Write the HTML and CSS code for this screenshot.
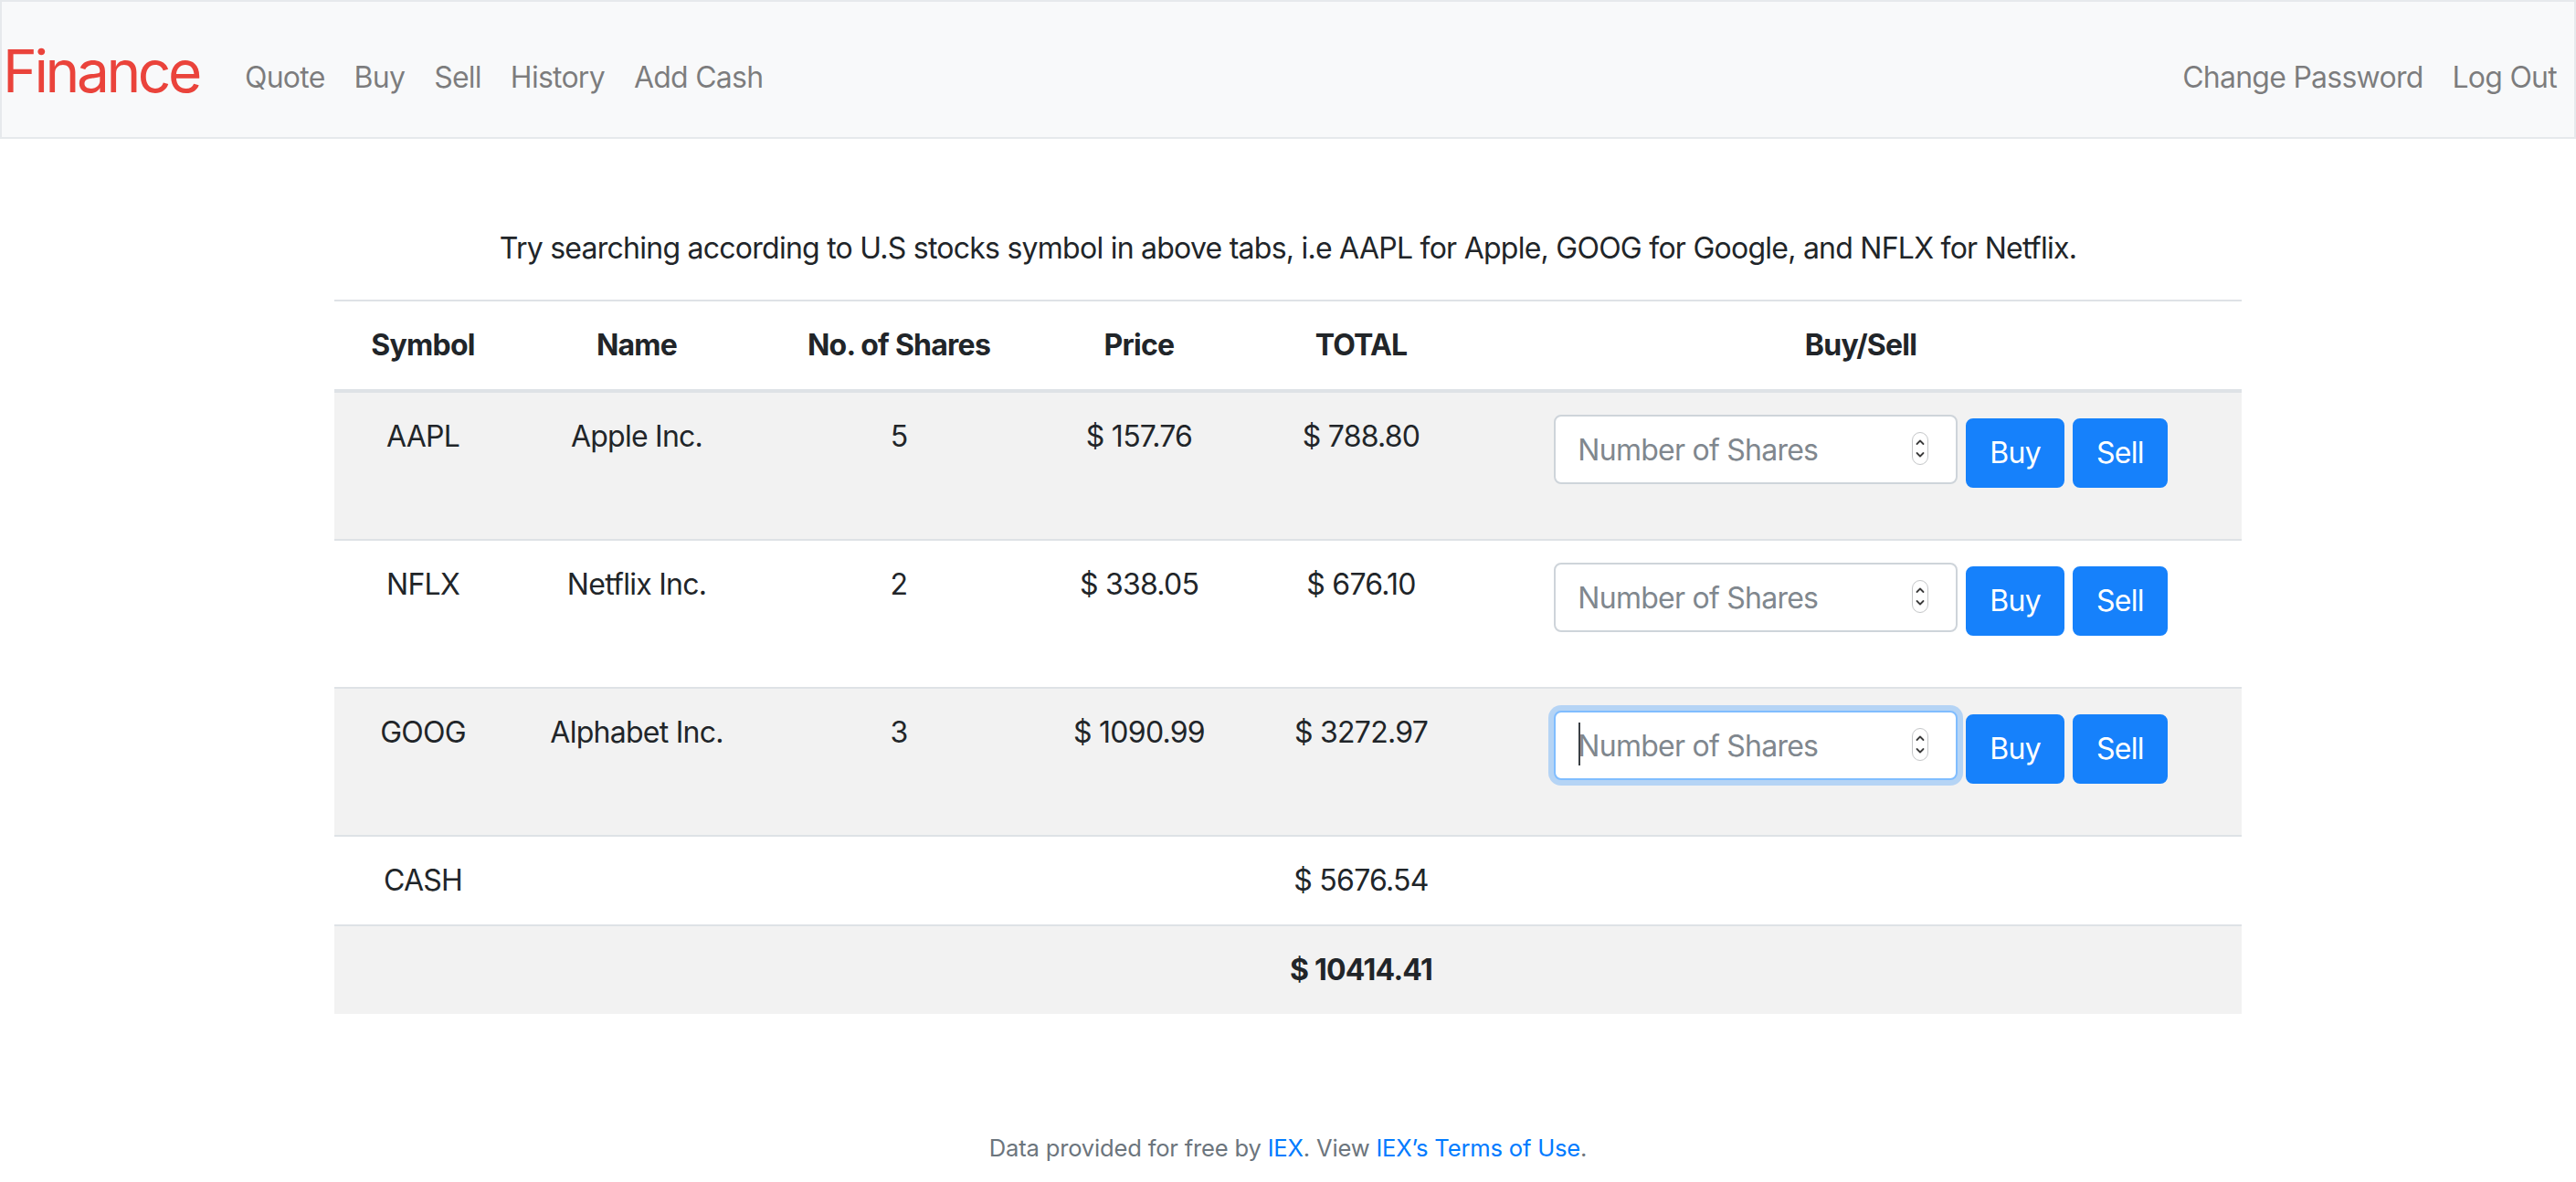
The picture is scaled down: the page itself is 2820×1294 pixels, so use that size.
FILE: index.html
```html
<!DOCTYPE html>
<html lang="en">
<head>
<meta charset="utf-8">
<title>C$50 Finance: Portfolio</title>
<link rel="stylesheet" href="styles.css">
</head>
<body>
<nav class="navbar">
  <a class="navbar-brand" href="/">Finance</a>
  <ul class="nav nav-main">
    <li><a class="nav-link" href="/quote">Quote</a></li>
    <li><a class="nav-link" href="/buy">Buy</a></li>
    <li><a class="nav-link" href="/sell">Sell</a></li>
    <li><a class="nav-link" href="/history">History</a></li>
    <li><a class="nav-link" href="/add_cash">Add Cash</a></li>
  </ul>
  <ul class="nav nav-user">
    <li><a class="nav-link" href="/change_password">Change Password</a></li>
    <li><a class="nav-link" href="/logout">Log Out</a></li>
  </ul>
</nav>

<main class="container">
  <p class="hint">Try searching according to U.S stocks symbol in above tabs, i.e AAPL for Apple, GOOG for Google, and NFLX for Netflix.</p>
  <table class="portfolio">
    <colgroup>
      <col class="c-symbol"><col class="c-name"><col class="c-shares"><col class="c-price"><col class="c-total"><col class="c-trade">
    </colgroup>
    <thead>
      <tr><th>Symbol</th><th>Name</th><th>No. of Shares</th><th>Price</th><th>TOTAL</th><th>Buy/Sell</th></tr>
    </thead>
    <tbody>
      <tr>
        <td>AAPL</td><td>Apple Inc.</td><td>5</td><td>$ 157.76</td><td>$ 788.80</td>
        <td>
          <form class="trade">
            <span class="field"><input class="form-control" type="text" placeholder="Number of Shares"><svg class="spin" viewBox="0 0 18 36"><rect x="0.5" y="0.5" width="17" height="35" rx="8.5"/><path d="M5.5 13 L9 9.5 L12.5 13"/><path d="M5.5 23 L9 26.5 L12.5 23"/></svg></span>
            <button class="btn" type="button">Buy</button>
            <button class="btn" type="button">Sell</button>
          </form>
        </td>
      </tr>
      <tr>
        <td>NFLX</td><td>Netflix Inc.</td><td>2</td><td>$ 338.05</td><td>$ 676.10</td>
        <td>
          <form class="trade">
            <span class="field"><input class="form-control" type="text" placeholder="Number of Shares"><svg class="spin" viewBox="0 0 18 36"><rect x="0.5" y="0.5" width="17" height="35" rx="8.5"/><path d="M5.5 13 L9 9.5 L12.5 13"/><path d="M5.5 23 L9 26.5 L12.5 23"/></svg></span>
            <button class="btn" type="button">Buy</button>
            <button class="btn" type="button">Sell</button>
          </form>
        </td>
      </tr>
      <tr>
        <td>GOOG</td><td>Alphabet Inc.</td><td>3</td><td>$ 1090.99</td><td>$ 3272.97</td>
        <td>
          <form class="trade">
            <span class="field"><input class="form-control focused" type="text" placeholder="Number of Shares"><span class="caret"></span><svg class="spin" viewBox="0 0 18 36"><rect x="0.5" y="0.5" width="17" height="35" rx="8.5"/><path d="M5.5 13 L9 9.5 L12.5 13"/><path d="M5.5 23 L9 26.5 L12.5 23"/></svg></span>
            <button class="btn" type="button">Buy</button>
            <button class="btn" type="button">Sell</button>
          </form>
        </td>
      </tr>
      <tr>
        <td>CASH</td><td></td><td></td><td></td><td>$ 5676.54</td><td></td>
      </tr>
      <tr>
        <td></td><td></td><td></td><td></td><td class="grand">$ 10414.41</td><td></td>
      </tr>
    </tbody>
  </table>
</main>

<footer class="footer">
  Data provided for free by <a href="https://iextrading.com/developer">IEX</a>. View <a href="https://iextrading.com/api-exhibit-a/">IEX’s Terms of Use</a>.
</footer>
</body>
</html>
```

FILE: styles.css
```css
* {
  box-sizing: border-box;
}

html, body {
  margin: 0;
  padding: 0;
}

body {
  background: #ffffff;
  color: #212529;
  font-family: "Inter", "Liberation Sans", Arial, sans-serif;
  font-size: 32px;
  line-height: 48px;
  letter-spacing: -0.75px;
}

a {
  text-decoration: none;
}

/* ---------- navbar ---------- */
.navbar {
  display: flex;
  align-items: center;
  height: 152px;
  padding: 16px 3px 16px 1px;
  background: #f8f9fa;
  border: 2px solid #e6e9ec;
}

.navbar-brand {
  color: #ea433b;
  font-size: 64px;
  line-height: 96px;
  letter-spacing: -3.4px;
  padding: 12px 0 8px;
  margin-right: 34px;
}

.nav {
  display: flex;
  list-style: none;
  margin: 0;
  padding: 0;
}

.nav-user {
  margin-left: auto;
}

.nav-link {
  display: block;
  padding: 25px 16px 7px;
  color: rgba(0, 0, 0, 0.5);
}

/* ---------- main ---------- */
.container {
  width: 2280px;
  margin: 0 auto;
  padding: 96px;
}

.hint {
  margin: 0 0 32px;
  text-align: center;
}

.portfolio {
  width: 100%;
  margin-bottom: 32px;
  border-collapse: collapse;
  table-layout: fixed;
}

.c-symbol { width: 194px; }
.c-name { width: 274px; }
.c-shares { width: 300px; }
.c-price { width: 226px; }
.c-total { width: 260px; }
.c-trade { width: 834px; }

.portfolio th,
.portfolio td {
  padding: 24px;
  text-align: center;
  vertical-align: top;
  border-top: 2px solid #dee2e6;
}

.portfolio th {
  vertical-align: bottom;
  border-bottom: 4px solid #dee2e6;
  font-weight: 700;
}

.portfolio tbody tr:nth-child(odd) {
  background: #f2f2f2;
}

.grand {
  font-weight: 700;
}

/* ---------- trade form ---------- */
.trade {
  display: flex;
  justify-content: center;
  align-items: flex-start;
  margin: 0 0 32px;
}

.field {
  position: relative;
  display: block;
  margin-right: 9px;
}

.form-control {
  display: block;
  width: 442px;
  height: 76px;
  padding: 12px 24px;
  font-family: inherit;
  font-size: 32px;
  line-height: 48px;
  letter-spacing: -0.75px;
  color: #495057;
  background: #ffffff;
  border: 2px solid #ced4da;
  border-radius: 8px;
  outline: none;
}

.form-control::placeholder {
  color: #80878e;
  opacity: 1;
}

.form-control.focused {
  border-color: #80bdff;
  box-shadow: 0 0 0 6px rgba(0, 123, 255, 0.25);
}

.caret {
  position: absolute;
  left: 27px;
  top: 13px;
  width: 2px;
  height: 47px;
  background: #3a3f44;
}

.spin {
  position: absolute;
  right: 32px;
  top: 19px;
  width: 18px;
  height: 36px;
}

.spin rect {
  fill: #ffffff;
  stroke: #c4c6c8;
  stroke-width: 1;
}

.spin path {
  fill: none;
  stroke: #3b3b3b;
  stroke-width: 1.8;
  stroke-linecap: round;
  stroke-linejoin: round;
}

.btn {
  margin-top: 4px;
  height: 76px;
  padding: 12px 24px;
  font-family: inherit;
  font-size: 32px;
  line-height: 48px;
  letter-spacing: -0.75px;
  color: #ffffff;
  background: #1681fb;
  border: 2px solid #1681fb;
  border-radius: 8px;
}

.btn + .btn {
  margin-left: 9px;
}

/* ---------- footer ---------- */
.footer {
  text-align: center;
  font-size: 25.6px;
  line-height: 38.4px;
  letter-spacing: -0.2px;
  color: #6c757d;
}

.footer a {
  color: #007bff;
}
```
